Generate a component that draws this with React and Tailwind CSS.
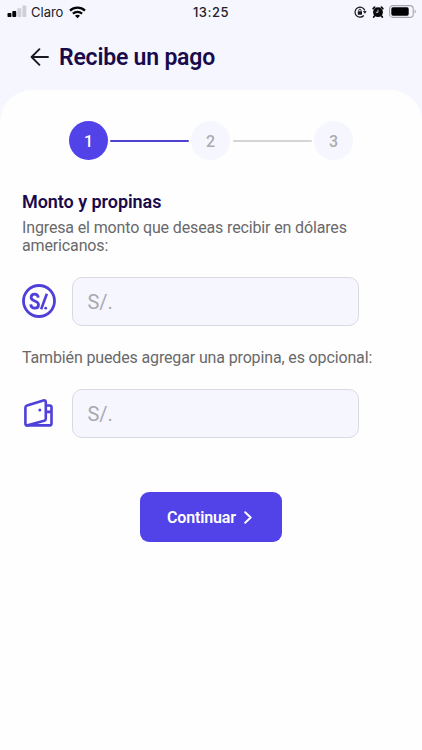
import React from "react";

function StatusBar() {
  return (
    <div className="grid h-6 grid-cols-3 items-center font-['Inter','Liberation_Sans',sans-serif] text-[13px] text-[#222226]">
      <div className="flex items-center pl-[7px]">
        <svg width="20" height="14" viewBox="0 0 20 14" className="shrink-0">
          <rect x="0.5" y="8" width="3.9" height="4" rx="0.8" fill="#050508" />
          <rect x="5.3" y="6" width="3.9" height="6" rx="0.8" fill="#050508" />
          <rect x="10.4" y="3.3" width="3.9" height="8.7" rx="0.8" fill="#cfcfd7" />
          <rect x="15.4" y="0.5" width="3.9" height="11.5" rx="0.8" fill="#cfcfd7" />
        </svg>
        <span className="ml-1 w-[33px] whitespace-nowrap pt-px">Claro</span>
        <svg width="17" height="13" viewBox="0 0 17 13" className="ml-[5px] shrink-0" fill="none" stroke="#050508" strokeWidth="2.2">
          <path d="M1 4.6C5.2 0.6 11.8 0.6 16 4.6" />
          <path d="M3.9 7.6C6.5 5.2 10.5 5.2 13.1 7.6" />
          <path d="M8.5 12.3L6 9.7C7.4 8.5 9.6 8.5 11 9.7Z" fill="#050508" stroke="none" />
        </svg>
      </div>
      <div className="pt-px text-center font-medium tracking-[0.5px]">13:25</div>
      <div className="flex items-center justify-end pr-[5px]">
        <svg width="13" height="12" viewBox="0 0 13 12" fill="none" stroke="#17171b">
          <path d="M10.8 4.5A5 5 0 1 0 9.8 9.5" strokeWidth="1.2" />
          <path d="M8.8 5.2L12.6 5L11 7.8Z" fill="#17171b" stroke="none" />
          <rect x="3.8" y="5.2" width="4.2" height="3.5" rx="0.5" fill="#17171b" stroke="none" />
          <path d="M4.7 5.4V4.4a1.2 1.2 0 0 1 2.4 0v1" strokeWidth="0.9" />
        </svg>
        <svg width="12" height="12" viewBox="0 0 12 12" className="ml-[5px]">
          <circle cx="6" cy="6.2" r="4.9" fill="#08080b" />
          <path d="M1.2 2.6L2.6 1.2M9.4 1.2L10.8 2.6M2.7 9.8L1.7 11.1M9.3 9.8L10.3 11.1" stroke="#08080b" strokeWidth="1.7" strokeLinecap="round" />
          <path d="M6 3.7V6.3H3.8" stroke="#f5f6fe" strokeWidth="0.8" fill="none" />
        </svg>
        <svg width="28" height="13" viewBox="0 0 28 13" className="-mt-px ml-[5px]">
          <rect x="0.6" y="0.6" width="23.6" height="11.8" rx="3.2" fill="none" stroke="#a5a5ad" strokeWidth="1.1" />
          <rect x="2.3" y="2.3" width="17.4" height="8.4" rx="1.6" fill="#020204" />
          <path d="M25.6 4.5C27.2 5 27.2 8 25.6 8.5Z" fill="#a5a5ad" />
        </svg>
      </div>
    </div>
  );
}

function Step({ number, active }) {
  return (
    <div
      className={`flex size-[39px] shrink-0 items-center justify-center rounded-full pt-[2px] text-[16px] font-medium ${
        active ? "bg-[#5243e9] text-white" : "bg-[#f5f6fe] text-[#acacb0]"
      }`}
    >
      {number}
    </div>
  );
}

function SolesIcon() {
  return (
    <svg width="34" height="34" viewBox="0 0 34 34" fill="none" stroke="#4f40d9" className="mb-px shrink-0">
      <circle cx="17" cy="17" r="15.5" strokeWidth="2.8" />
      <path d="M16.3 13.7C16 11.2 14.8 10.2 12.6 10.2C10.4 10.2 9.1 11.5 9.1 13.5C9.1 17.9 16.5 16 16.5 20.7C16.5 22.9 15 24.2 12.8 24.2C10.4 24.2 9 22.9 8.7 20.3" strokeWidth="2.8" />
      <path d="M24.9 9.8L19.1 25.2" strokeWidth="2.6" />
      <circle cx="23.7" cy="24.2" r="1.4" fill="#4f40d9" stroke="none" />
    </svg>
  );
}

function WalletIcon() {
  return (
    <svg width="34" height="34" viewBox="0 0 34 34" fill="none" stroke="#4f40d9" strokeWidth="2.6" strokeLinejoin="round" strokeLinecap="round" className="shrink-0">
      <path d="M5 8.6L21.4 3.4C22.8 3 23.8 3.7 23.8 5.1V21.5C23.8 22.8 23.3 23.4 22.2 23.8L5.6 28.3C4.2 28.7 3.4 28 3.4 26.7V10.7C3.4 9.6 3.9 8.9 5 8.6Z" />
      <path d="M5 28.4H27.7C29 28.4 29.5 27.7 29.5 26.4V10.5C29.5 9.2 29 8.5 27.8 8.5H24.4M24.4 14.9H29" />
      <circle cx="17.8" cy="12.9" r="1.5" fill="#4f40d9" stroke="none" />
    </svg>
  );
}

function AmountField({ icon, label }) {
  return (
    <div className="flex items-center">
      {icon}
      <input
        aria-label={label}
        placeholder="S/."
        className="ml-[15.5px] h-[49px] w-[287px] rounded-[10px] border border-[#d9d9e0] bg-[#f5f6fe] px-[15px] text-[20px] tracking-[-0.1px] outline-none placeholder:text-[#a9a9ae]"
      />
    </div>
  );
}

export default function App() {
  return (
    <div className="flex h-[750px] w-[422px] flex-col overflow-hidden bg-[#f5f6fe] font-['Roboto','Liberation_Sans',sans-serif]">
      <StatusBar />
      <header className="flex h-[66px] items-center pl-[30px]">
        <svg width="20" height="18" viewBox="0 0 20 18" fill="none" stroke="#1b1a20" strokeWidth="1.9" strokeLinecap="round" strokeLinejoin="round">
          <path d="M18 9H1.7M9.4 1.2L1.6 9L9.4 16.8" />
        </svg>
        <h1 className="ml-[9px] pt-[2px] text-[23px] font-semibold leading-7 tracking-[-0.2px] text-[#190b4b]">Recibe un pago</h1>
      </header>
      <main className="flex-1 rounded-t-[32px] bg-[#fefefe] px-[22px] pt-[31px]">
        <div className="ml-[47px] flex items-center">
          <Step number="1" active />
          <div className="mx-[2px] h-[2px] w-[79px] rounded-full bg-[#4f40d4]" />
          <Step number="2" />
          <div className="ml-[3px] mr-[2px] h-[2px] w-[79px] rounded-full bg-[#d5d5d8]" />
          <Step number="3" />
        </div>
        <h2 className="mt-[31px] text-[18px] font-semibold leading-[22px] tracking-[-0.05px] text-[#190b4b]">Monto y propinas</h2>
        <p className="mt-[6px] text-[16px] leading-[18px] tracking-[-0.14px] text-[#69696b]">
          Ingresa el monto que deseas recibir en dólares
          <br />
          americanos:
        </p>
        <div className="mt-[22px]">
          <AmountField icon={<SolesIcon />} label="Monto" />
        </div>
        <p className="mt-[23px] whitespace-nowrap text-[16px] leading-[18px] tracking-[-0.14px] text-[#69696b]">
          También puedes agregar una propina, es opcional:
        </p>
        <div className="mt-[22px]">
          <AmountField icon={<WalletIcon />} label="Propina" />
        </div>
        <button className="ml-[118px] mt-[54px] flex h-[50px] w-[142px] items-center rounded-[9px] bg-[#5243e9] pl-[27px] text-[16px] font-semibold tracking-[-0.15px] text-white">
          <span className="pt-[2px]">Continuar</span>
          <svg width="8" height="13" viewBox="0 0 8 13" fill="none" stroke="white" strokeWidth="1.9" strokeLinecap="round" strokeLinejoin="round" className="ml-2">
            <path d="M1.2 1.2L6.7 6.5L1.2 11.8" />
          </svg>
        </button>
      </main>
    </div>
  );
}
